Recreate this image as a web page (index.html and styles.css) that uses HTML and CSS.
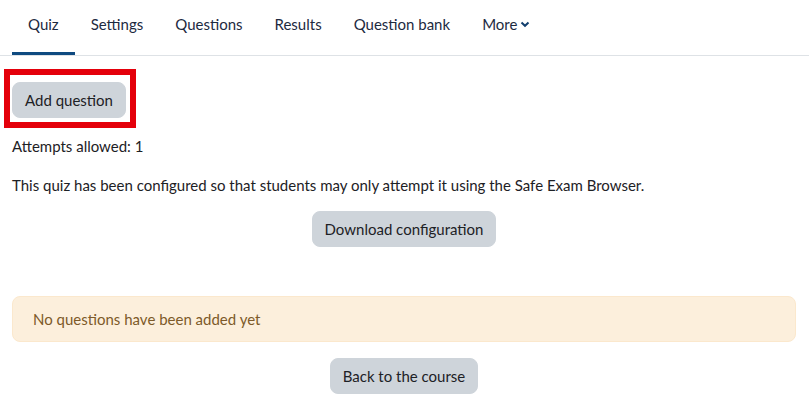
FILE: index.html
```html
<!DOCTYPE html>
<html lang="en">
<head>
  <meta charset="UTF-8">
  <title>Quiz</title>
  <link rel="stylesheet" href="styles.css">
</head>
<body>
  <nav class="tabs">
    <a class="tab active" href="#">Quiz</a>
    <a class="tab" href="#">Settings</a>
    <a class="tab" href="#">Questions</a>
    <a class="tab" href="#">Results</a>
    <a class="tab" href="#">Question bank</a>
    <a class="tab more" href="#">More
      <svg width="10" height="10" viewBox="0 0 10 10"><polyline points="1.5,3.5 5,6.8 8.5,3.5" fill="none" stroke="currentColor" stroke-width="2"/></svg>
    </a>
  </nav>

  <main class="content">
    <div class="add-row">
      <span class="marked">
        <button class="btn">Add question</button>
        <span class="highlight"></span>
      </span>
    </div>

    <p class="attempts">Attempts allowed: 1</p>
    <p class="seb">This quiz has been configured so that students may only attempt it using the Safe Exam Browser.</p>

    <div class="center">
      <button class="btn">Download configuration</button>
    </div>

    <div class="alert">No questions have been added yet</div>

    <div class="center">
      <button class="btn">Back to the course</button>
    </div>
  </main>
</body>
</html>
```

FILE: styles.css
```css
body {
  margin: 0;
  font-family: Lato, "Liberation Sans", sans-serif;
  font-size: 15px;
  line-height: 22px;
  color: #1d2125;
  background: #fff;
}

.tabs {
  display: flex;
  padding: 0 12px;
  height: 55px;
  border-bottom: 1px solid #dee2e6;
}

.tab {
  display: flex;
  align-items: center;
  gap: 3px;
  padding: 0 16px 4px;
  color: #1d2a3f;
  text-decoration: none;
  border-bottom: 3px solid transparent;
}

.tab.active {
  border-bottom-color: #0f4a80;
}

.tab.more svg {
  color: #123f6e;
}

.content {
  padding: 26px 13px 0 12px;
}

.add-row {
  display: flex;
}

.marked {
  position: relative;
  display: inline-block;
}

.highlight {
  position: absolute;
  left: -8px;
  top: -13px;
  right: -10px;
  bottom: -10px;
  border: 6px solid #e4000b;
}

.btn {
  font-family: inherit;
  font-size: 15px;
  line-height: 22px;
  color: #1d2125;
  background: #ced4da;
  border: 1px solid #ced4da;
  border-radius: 8px;
  padding: 6px 12px;
  display: block;
}

p {
  margin: 0;
}

.attempts {
  margin-top: 17px;
}

.seb {
  margin-top: 17px;
}

.center {
  display: flex;
  justify-content: center;
}

.seb + .center {
  margin-top: 15px;
}

.alert {
  margin-top: 49px;
  padding: 11px 20px;
  background: #fcefdc;
  border: 1px solid #fbe8cd;
  border-radius: 8px;
  color: #7d5a29;
}

.alert + .center {
  margin-top: 16px;
}
```
